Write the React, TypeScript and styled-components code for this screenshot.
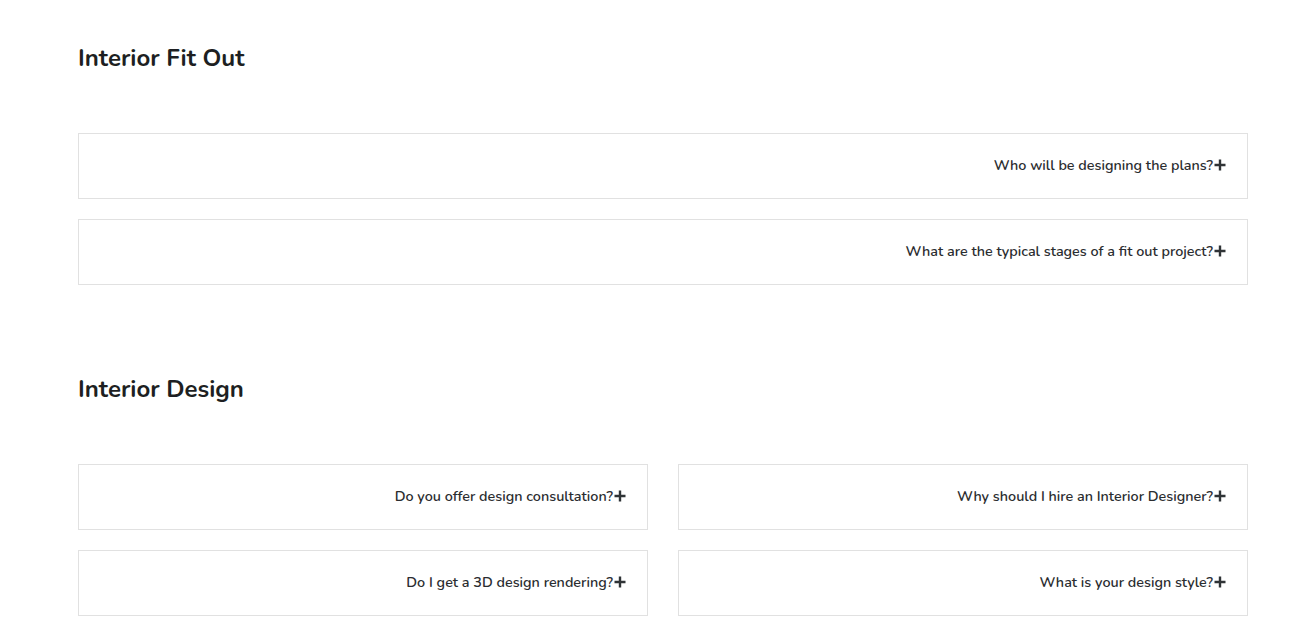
import React from "react";
import styled, { createGlobalStyle } from "styled-components";

const Global = createGlobalStyle`
  html, body { margin: 0; padding: 0; background: #ffffff; }
  body { font-family: "Nunito", "Open Sans", "Liberation Sans", sans-serif; color: #222; }
`;

const Page = styled.main`
  width: 1170px;
  margin-left: 78px;
  padding-top: 43px;
`;

const Section = styled.section<{ $gapTop?: number }>`
  margin-top: ${(p) => p.$gapTop ?? 0}px;
`;

const Heading = styled.h2`
  margin: 0 0 60px 0;
  font-size: 24px;
  line-height: 30px;
  font-weight: 700;
  color: #1d1f22;
`;

const Grid = styled.div<{ $cols: number }>`
  display: grid;
  grid-template-columns: repeat(${(p) => p.$cols}, 1fr);
  column-gap: 30px;
  row-gap: 20px;
`;

const Item = styled.div`
  box-sizing: border-box;
  height: 66px;
  border: 1px solid #e1e1e1;
  display: flex;
  align-items: center;
  justify-content: flex-end;
  padding: 0 21px 2px 20px;
`;

const Question = styled.span`
  font-size: 14.35px;
  line-height: 20px;
  font-weight: 600;
  color: #2b2d30;
`;

const Plus = styled.svg`
  width: 12px;
  height: 12px;
  margin-left: 1px;
  flex-shrink: 0;
`;

const PlusIcon = () => (
  <Plus viewBox="0 0 12 12">
    <path d="M6 0.5v11M0.5 6h11" stroke="#2f3336" strokeWidth="2.4" />
  </Plus>
);

const FaqItem = ({ q }: { q: string }) => (
  <Item>
    <Question>{q}</Question>
    <PlusIcon />
  </Item>
);

export default function App() {
  return (
    <>
      <Global />
      <Page>
        <Section>
          <Heading>Interior Fit Out</Heading>
          <Grid $cols={1}>
            <FaqItem q="Who will be designing the plans?" />
            <FaqItem q="What are the typical stages of a fit out project?" />
          </Grid>
        </Section>
        <Section $gapTop={89}>
          <Heading>Interior Design</Heading>
          <Grid $cols={2}>
            <FaqItem q="Do you offer design consultation?" />
            <FaqItem q="Why should I hire an Interior Designer?" />
            <FaqItem q="Do I get a 3D design rendering?" />
            <FaqItem q="What is your design style?" />
          </Grid>
        </Section>
      </Page>
    </>
  );
}
